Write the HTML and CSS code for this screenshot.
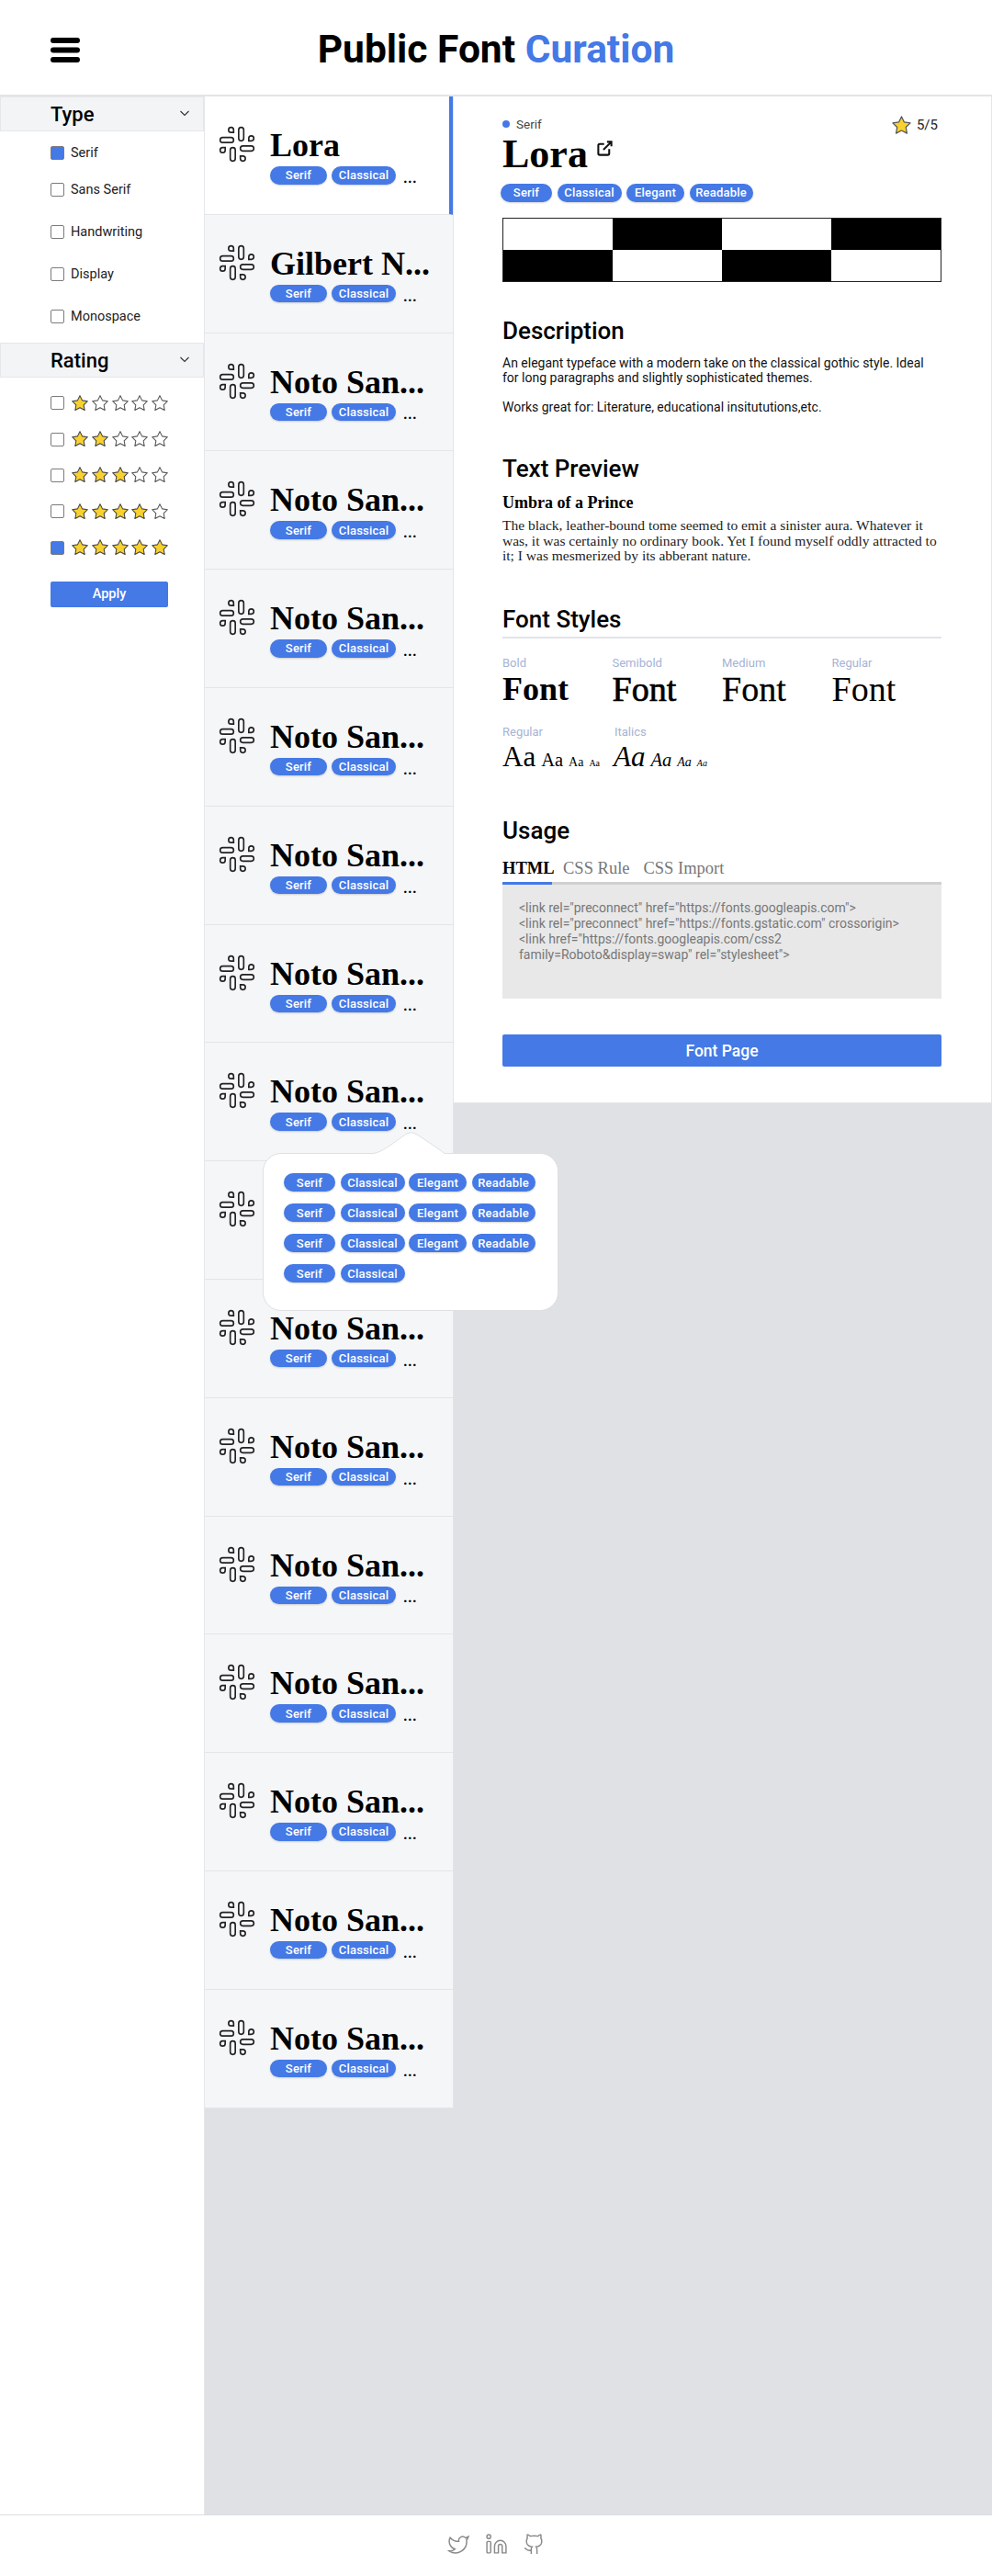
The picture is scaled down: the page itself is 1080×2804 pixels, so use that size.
FILE: index.html
```html
<!DOCTYPE html>
<html lang="en">
<head>
<meta charset="utf-8">
<title>Public Font Curation</title>
<link rel="stylesheet" href="styles.css">
</head>
<body>
<svg class="defs" width="0" height="0" aria-hidden="true">
  <symbol id="slack" viewBox="0 0 24 24"><g fill="none" stroke="currentColor" stroke-width=".9"><rect x="13" y="2" width="3" height="8" rx="1.5"/><path d="M19 8.5V10h1.5A1.5 1.5 0 1 0 19 8.5"/><rect x="8" y="14" width="3" height="8" rx="1.5"/><path d="M5 15.5V14H3.5A1.5 1.5 0 1 0 5 15.5"/><rect x="14" y="13" width="8" height="3" rx="1.5"/><path d="M15.5 19H14v1.5a1.5 1.5 0 1 0 1.5-1.5z"/><rect x="2" y="8" width="8" height="3" rx="1.5"/><path d="M8.5 5H10V3.5A1.5 1.5 0 1 0 8.5 5z"/></g></symbol>
  <symbol id="star" viewBox="0 0 24 24"><polygon points="12 2 15.09 8.26 22 9.27 17 14.14 18.18 21.02 12 17.77 5.82 21.02 7 14.14 2 9.27 8.91 8.26 12 2" stroke-width="1.3" stroke-linejoin="round"/></symbol>
  <symbol id="chev" viewBox="0 0 12 12"><path d="M1.5 4l4.5 4.5L10.500 4" fill="none" stroke="#333" stroke-width="1.100"/></symbol>
</svg>
<div class="page">
  <header class="topbar">
    <svg class="burger" viewBox="0 0 32 27" aria-hidden="true"><path d="M3 3h26M3 13.500h26M3 24h26" fill="none" stroke="#000" stroke-width="6" stroke-linecap="round"/></svg>
    <h1 class="brand">Public Font <span class="brand-accent">Curation</span></h1>
  </header>
  <main class="main">
    <aside class="sidebar">
      <div class="filter-head"><span>Type</span><svg class="chev"><use href="#chev"/></svg></div>
      <div class="type-options">
        <label class="opt opt-short"><i class="box box-on"></i>Serif</label>
        <label class="opt opt-short"><i class="box"></i>Sans Serif</label>
        <label class="opt opt-tall opt-first-tall"><i class="box"></i>Handwriting</label>
        <label class="opt opt-tall"><i class="box"></i>Display</label>
        <label class="opt opt-tall"><i class="box"></i>Monospace</label>
      </div>
      <div class="filter-head"><span>Rating</span><svg class="chev"><use href="#chev"/></svg></div>
      <div class="rating-options">
        <div class="rate"><i class="box"></i><svg class="st on"><use href="#star"/></svg><svg class="st"><use href="#star"/></svg><svg class="st"><use href="#star"/></svg><svg class="st"><use href="#star"/></svg><svg class="st"><use href="#star"/></svg></div>
        <div class="rate"><i class="box"></i><svg class="st on"><use href="#star"/></svg><svg class="st on"><use href="#star"/></svg><svg class="st"><use href="#star"/></svg><svg class="st"><use href="#star"/></svg><svg class="st"><use href="#star"/></svg></div>
        <div class="rate"><i class="box"></i><svg class="st on"><use href="#star"/></svg><svg class="st on"><use href="#star"/></svg><svg class="st on"><use href="#star"/></svg><svg class="st"><use href="#star"/></svg><svg class="st"><use href="#star"/></svg></div>
        <div class="rate"><i class="box"></i><svg class="st on"><use href="#star"/></svg><svg class="st on"><use href="#star"/></svg><svg class="st on"><use href="#star"/></svg><svg class="st on"><use href="#star"/></svg><svg class="st"><use href="#star"/></svg></div>
        <div class="rate"><i class="box box-on"></i><svg class="st on"><use href="#star"/></svg><svg class="st on"><use href="#star"/></svg><svg class="st on"><use href="#star"/></svg><svg class="st on"><use href="#star"/></svg><svg class="st on"><use href="#star"/></svg></div>
      </div>
      <button class="apply">Apply</button>
    </aside>

    <section class="list">
      <article class="row row-active"><svg class="ico"><use href="#slack"/></svg><div class="row-body"><div class="row-name">Lora</div><div class="row-tags"><span class="tag tag-a">Serif</span><span class="tag tag-b">Classical</span><span class="more">...</span></div></div></article>
      <article class="row"><svg class="ico"><use href="#slack"/></svg><div class="row-body"><div class="row-name">Gilbert N...</div><div class="row-tags"><span class="tag tag-a">Serif</span><span class="tag tag-b">Classical</span><span class="more">...</span></div></div></article>
      <article class="row"><svg class="ico"><use href="#slack"/></svg><div class="row-body"><div class="row-name">Noto San...</div><div class="row-tags"><span class="tag tag-a">Serif</span><span class="tag tag-b">Classical</span><span class="more">...</span></div></div></article>
      <article class="row"><svg class="ico"><use href="#slack"/></svg><div class="row-body"><div class="row-name">Noto San...</div><div class="row-tags"><span class="tag tag-a">Serif</span><span class="tag tag-b">Classical</span><span class="more">...</span></div></div></article>
      <article class="row"><svg class="ico"><use href="#slack"/></svg><div class="row-body"><div class="row-name">Noto San...</div><div class="row-tags"><span class="tag tag-a">Serif</span><span class="tag tag-b">Classical</span><span class="more">...</span></div></div></article>
      <article class="row"><svg class="ico"><use href="#slack"/></svg><div class="row-body"><div class="row-name">Noto San...</div><div class="row-tags"><span class="tag tag-a">Serif</span><span class="tag tag-b">Classical</span><span class="more">...</span></div></div></article>
      <article class="row"><svg class="ico"><use href="#slack"/></svg><div class="row-body"><div class="row-name">Noto San...</div><div class="row-tags"><span class="tag tag-a">Serif</span><span class="tag tag-b">Classical</span><span class="more">...</span></div></div></article>
      <article class="row"><svg class="ico"><use href="#slack"/></svg><div class="row-body"><div class="row-name">Noto San...</div><div class="row-tags"><span class="tag tag-a">Serif</span><span class="tag tag-b">Classical</span><span class="more">...</span></div></div></article>
      <article class="row row-pop"><svg class="ico"><use href="#slack"/></svg><div class="row-body"><div class="row-name">Noto San...</div><div class="row-tags"><span class="tag tag-a">Serif</span><span class="tag tag-b">Classical</span><span class="more">...</span></div></div>
        <div class="popover">
          <svg class="pop-arrow" viewBox="0 0 90 24" aria-hidden="true"><path d="M0 23.500h3C13 23.500 34 5 40 2c3-1.500 6-1.500 9 0 6 3 26 17 32 21.500h9V25H0z" fill="#fff"/><path d="M0 23.500h3C13 23.500 34 5 40 2c3-1.500 6-1.500 9 0 6 3 26 17 32 21.500h9" fill="none" stroke="#dfe0e4"/></svg>
          <div class="pop-grid">
            <span class="tag pop-a">Serif</span><span class="tag pop-b">Classical</span><span class="tag pop-c">Elegant</span><span class="tag pop-d">Readable</span>
            <span class="tag pop-a">Serif</span><span class="tag pop-b">Classical</span><span class="tag pop-c">Elegant</span><span class="tag pop-d">Readable</span>
            <span class="tag pop-a">Serif</span><span class="tag pop-b">Classical</span><span class="tag pop-c">Elegant</span><span class="tag pop-d">Readable</span>
            <span class="tag pop-a">Serif</span><span class="tag pop-b">Classical</span>
          </div>
        </div>
      </article>
      <article class="row"><svg class="ico"><use href="#slack"/></svg></article>
      <article class="row"><svg class="ico"><use href="#slack"/></svg><div class="row-body"><div class="row-name">Noto San...</div><div class="row-tags"><span class="tag tag-a">Serif</span><span class="tag tag-b">Classical</span><span class="more">...</span></div></div></article>
      <article class="row"><svg class="ico"><use href="#slack"/></svg><div class="row-body"><div class="row-name">Noto San...</div><div class="row-tags"><span class="tag tag-a">Serif</span><span class="tag tag-b">Classical</span><span class="more">...</span></div></div></article>
      <article class="row"><svg class="ico"><use href="#slack"/></svg><div class="row-body"><div class="row-name">Noto San...</div><div class="row-tags"><span class="tag tag-a">Serif</span><span class="tag tag-b">Classical</span><span class="more">...</span></div></div></article>
      <article class="row"><svg class="ico"><use href="#slack"/></svg><div class="row-body"><div class="row-name">Noto San...</div><div class="row-tags"><span class="tag tag-a">Serif</span><span class="tag tag-b">Classical</span><span class="more">...</span></div></div></article>
      <article class="row"><svg class="ico"><use href="#slack"/></svg><div class="row-body"><div class="row-name">Noto San...</div><div class="row-tags"><span class="tag tag-a">Serif</span><span class="tag tag-b">Classical</span><span class="more">...</span></div></div></article>
      <article class="row"><svg class="ico"><use href="#slack"/></svg><div class="row-body"><div class="row-name">Noto San...</div><div class="row-tags"><span class="tag tag-a">Serif</span><span class="tag tag-b">Classical</span><span class="more">...</span></div></div></article>
      <article class="row"><svg class="ico"><use href="#slack"/></svg><div class="row-body"><div class="row-name">Noto San...</div><div class="row-tags"><span class="tag tag-a">Serif</span><span class="tag tag-b">Classical</span><span class="more">...</span></div></div></article>
    </section>

    <section class="detail">
      <div class="meta">
        <div class="kind"><i class="dot"></i>Serif</div>
        <div class="score"><svg class="score-star"><use href="#star"/></svg>5/5</div>
      </div>
      <div class="title-line">
        <h2 class="font-title">Lora</h2>
        <svg class="ext" viewBox="0 0 24 24" aria-hidden="true"><path d="M18 13v6a2 2 0 0 1-2 2H5a2 2 0 0 1-2-2V8a2 2 0 0 1 2-2h6M15 3h6v6M10 14 21 3" fill="none" stroke="#111" stroke-width="2.600"/></svg>
      </div>
      <div class="detail-tags"><span class="tag pop-a">Serif</span><span class="tag pop-b">Classical</span><span class="tag pop-c">Elegant</span><span class="tag pop-d">Readable</span></div>
      <div class="checker">
        <i class="cell"></i><i class="cell cell-dark"></i><i class="cell"></i><i class="cell cell-dark"></i>
        <i class="cell cell-dark"></i><i class="cell"></i><i class="cell cell-dark"></i><i class="cell"></i>
      </div>

      <h3 class="sec sec-desc">Description</h3>
      <p class="copy">An elegant typeface with a modern take on the classical gothic style. Ideal for long paragraphs and slightly sophisticated themes.</p>
      <p class="copy copy-next">Works great for: Literature, educational insitututions,etc.</p>

      <h3 class="sec sec-preview">Text Preview</h3>
      <h4 class="umbra">Umbra of a Prince</h4>
      <p class="story">The black, leather-bound tome seemed to emit a sinister aura. Whatever it was, it was certainly no ordinary book. Yet I found myself oddly attracted to it; I was mesmerized by its abberant nature.</p>

      <h3 class="sec sec-styles">Font Styles</h3>
      <div class="weights">
        <div><div class="lbl">Bold</div><div class="sample s-bold">Font</div></div>
        <div><div class="lbl">Semibold</div><div class="sample s-semi">Font</div></div>
        <div><div class="lbl">Medium</div><div class="sample s-med">Font</div></div>
        <div><div class="lbl">Regular</div><div class="sample s-reg">Font</div></div>
      </div>
      <div class="scales">
        <div class="scale-col"><div class="lbl">Regular</div><div class="aa-row"><span class="aa1">Aa</span><span class="aa2">Aa</span><span class="aa3">Aa</span><span class="aa4">Aa</span></div></div>
        <div class="scale-col"><div class="lbl lbl-it">Italics</div><div class="aa-row aa-it"><span class="aa1">Aa</span><span class="aa2">Aa</span><span class="aa3">Aa</span><span class="aa4">Aa</span></div></div>
      </div>

      <h3 class="sec sec-usage">Usage</h3>
      <div class="tabs"><span class="tab tab-on">HTML</span><span class="tab">CSS Rule</span><span class="tab">CSS Import</span></div>
      <div class="code">&lt;link rel="preconnect" href="https://fonts.googleapis.com"&gt;<br>&lt;link rel="preconnect" href="https://fonts.gstatic.com" crossorigin&gt;<br>&lt;link href="https://fonts.googleapis.com/css2<br>family=Roboto&amp;display=swap" rel="stylesheet"&gt;</div>
      <button class="page-btn">Font Page</button>
    </section>
  </main>
  <footer class="foot">
    <svg class="social" viewBox="0 0 24 24" aria-hidden="true"><path d="M22 4s-.7 2.100-2 3.400c1.600 10-9.400 17.300-18 11.600 2.200.1 4.400-.6 6-2C3 15.500.5 9.600 3 5c2.200 2.600 5.600 4.100 9 4-.9-4.200 4-6.600 7-3.800 1.100 0 3-1.200 3-1.200z"/></svg>
    <svg class="social" viewBox="0 0 24 24" aria-hidden="true"><path d="M16 8a6 6 0 0 1 6 6v7h-4v-7a2 2 0 0 0-4 0v7h-4v-7a6 6 0 0 1 6-6z"/><rect x="2" y="9" width="4" height="12" rx="1"/><circle cx="4" cy="4" r="2"/></svg>
    <svg class="social" viewBox="0 0 24 24" aria-hidden="true"><path d="M15 22v-4a4.800 4.800 0 0 0-1-3.500c3 0 6-2 6-5.500.08-1.250-.27-2.480-1-3.500.28-1.150.28-2.350 0-3.500 0 0-1 0-3 1.500-2.640-.5-5.360-.5-8 0C6 2 5 2 5 2c-.3 1.150-.3 2.350 0 3.500A5.403 5.403 0 0 0 4 9c0 3.500 3 5.500 6 5.500-.39.490-.68 1.050-.85 1.650-.17.6-.22 1.230-.15 1.850v4M9 18c-4.510 2-5-2-7-2"/></svg>
  </footer>
</div>
</body>
</html>
```

FILE: styles.css
```css
* { box-sizing: border-box; }
html, body { margin: 0; padding: 0; }
body { font-family: Roboto, "Liberation Sans", sans-serif; color: #000; background: #fff; }
.defs { position: absolute; }
.page { display: flex; flex-direction: column; height: 2804px; width: 1080px; overflow: hidden; }

/* header */
.topbar { height: 105px; flex: none; display: flex; align-items: center; position: relative; border-bottom: 2px solid #e3e4e9; justify-content: center; }
.burger { position: absolute; left: 55px; top: 41px; width: 32px; height: 27px; }
.brand { margin: 0; font-size: 42.500px; font-weight: 700; line-height: 48px; position: relative; top: 2px; }
.brand-accent { color: #4479e6; }

.main { flex: 1; display: flex; background: #e0e1e5; min-height: 0; }

/* sidebar */
.sidebar { width: 223px; flex: none; background: #fff; border-right: 1px solid #e6e7eb; }
.filter-head { height: 38px; background: #f3f4f6; border: 1px solid #e6e7eb; display: flex; align-items: center; justify-content: space-between; padding: 0 14px 0 54px; font-size: 22px; font-weight: 500; }
.chev { width: 12px; height: 12px; position: relative; top: -1px; }
.type-options { height: 230px; padding-top: 3px; }
.opt { display: flex; align-items: center; gap: 7px; padding-left: 55px; font-size: 14.500px; color: #222; }
.opt-short { height: 40px; }
.opt-tall { height: 46px; }
.opt-first-tall { margin-top: 3px; }
.box { width: 15px; height: 15px; flex: none; border: 1px solid #7b7b7b; border-radius: 2px; background: #fff; display: block; }
.box-on { background: #4479e6; }
.rating-options { padding-top: 8px; }
.rate { display: flex; align-items: center; height: 39.400px; padding-left: 55px; }
.rate .box { margin-right: 7px; }
.st { width: 20px; height: 20px; margin-right: 1.800px; fill: #fff; stroke: #555; }
.st.on { fill: #f8d12f; stroke: #444; }
.apply { display: block; margin: 17px 0 0 55px; width: 128px; height: 28px; border: 0; border-radius: 2px; background: #4479e6; color: #fff; font: 500 14.500px Roboto, sans-serif; }

/* list */
.list { width: 271px; flex: none; align-self: flex-start; }
.row { height: 128.800px; display: flex; background: #f5f6f8; border-bottom: 1px solid #e4e5e9; border-right: 1px solid #e4e5e9; padding-left: 13px; position: relative; }
.row-active { background: #fff; border-right: 5px solid #4479e6; }
.ico { width: 44px; height: 44px; margin-top: 30px; color: #222; flex: none; }
.row-body { margin-left: 14px; }
.row-name { font-family: "Liberation Serif", serif; font-weight: 700; font-size: 36px; line-height: 40px; margin-top: 33px; white-space: nowrap; }
.row-tags { display: flex; align-items: center; margin-top: 3px; }
.tag { display: flex; align-items: center; justify-content: center; height: 19.500px; border-radius: 10px; background: #4479e6; color: #fff; font-size: 13px; font-weight: 500; box-shadow: 0 1px 2px rgba(0,0,0,.18); letter-spacing: .2px; }
.tag-a { width: 62px; }
.tag-b { width: 70px; margin-left: 5px; }
.more { margin-left: 8px; font-size: 16px; font-weight: 700; line-height: 10px; position: relative; top: 3px; letter-spacing: .3px; }

/* popover */
.popover { position: absolute; left: 63px; top: 120px; width: 322px; height: 172px; background: #fff; border: 1px solid #dfe0e4; border-radius: 20px; z-index: 5; padding: 21px 0 0 22px; }
.pop-arrow { position: absolute; left: 116px; top: -24px; width: 90px; height: 24px; }
.pop-grid { display: grid; grid-template-columns: 56px 69px 63px 69px; gap: 13.500px 5.500px; }
.pop-a { width: 56px; }
.pop-b { width: 70px; }
.pop-c { width: 63px; }
.pop-d { width: 69px; }

/* detail */
.detail { flex: 1; align-self: flex-start; height: 1096px; margin-left: -1px; position: relative; background: #fff; border-left: 1px solid #e4e5e9; padding: 22px 54px 0 53px; border-right: 1px solid #e4e5e9; border-bottom: 1px solid #e4e5e9; }
.meta { display: flex; justify-content: space-between; height: 18px; }
.kind { display: flex; align-items: center; gap: 7px; font-size: 13.500px; color: #444; height: 16px; }
.dot { width: 8px; height: 8px; border-radius: 50%; background: #4479e6; display: block; }
.score { display: flex; align-items: center; gap: 5px; font-size: 15px; margin-right: 4px; color: #222; }
.score-star { width: 23px; height: 23px; fill: #f8d12f; stroke: #555; }
.title-line { display: flex; align-items: flex-start; height: 55px; }
.font-title { margin: -1px 0 0; font-family: "Liberation Serif", serif; font-size: 44px; line-height: 48px; font-weight: 700; }
.ext { width: 19px; height: 19px; margin: 7px 0 0 9px; }
.detail-tags { display: flex; gap: 5.500px; margin-left: -2px; }
.checker { margin-top: 17.500px; height: 70px; display: grid; grid-template-columns: repeat(4, 1fr); grid-template-rows: 1fr 1fr; border: 1px solid #222; }
.cell { display: block; background: #fff; }
.cell-dark { background: #000; }
.sec { margin: 0; font-size: 26px; font-weight: 500; line-height: 30px; }
.sec-desc { margin-top: 38px; }
.copy { margin: 12px 0 0; font-size: 14px; line-height: 16px; color: #111; }
.copy-next { margin-top: 16px; }
.sec-preview { margin-top: 44px; }
.umbra { margin: 12px 0 0; font-family: "Liberation Serif", serif; font-size: 18px; line-height: 20px; font-weight: 700; }
.story { margin: 7px 0 0; font-family: "Liberation Serif", serif; font-size: 15.500px; line-height: 16.700px; color: #222; }
.sec-styles { margin-top: 45px; padding-bottom: 4px; border-bottom: 2px solid #e2e3e6; line-height: 30px; height: 36px; }
.weights { display: grid; grid-template-columns: repeat(4, 1fr); margin-top: 19px; }
.lbl { font-size: 13px; line-height: 16px; color: #a6b3d4; }
.lbl-it { margin-left: 1px; }
.sample { font-family: "Liberation Serif", serif; font-size: 38px; line-height: 40px; margin-bottom: 2px; }
.s-bold { font-weight: 700; font-size: 36px; }
.s-semi { -webkit-text-stroke: .7px #000; }
.s-med { -webkit-text-stroke: .3px #000; }
.scales { display: flex; margin-top: 17px; }
.scale-col { width: 121px; }
.aa-row { display: flex; align-items: baseline; gap: 6px; font-family: "Liberation Serif", serif; line-height: 38px; }
.aa-it { font-style: italic; }
.aa1 { font-size: 31px; }
.aa2 { font-size: 20.500px; }
.aa3 { font-size: 14px; }
.aa4 { font-size: 10px; }
.sec-usage { margin-top: 39px; }
.tabs { display: flex; gap: 15px; margin-top: 15px; height: 29px; font-family: "Liberation Serif", serif; font-size: 18.500px; line-height: 22px; border-bottom: 3px solid #d0d0d0; position: relative; }
.tab { color: #777; display: block; height: 29px; }
.tab-on { color: #000; font-weight: 700; width: 54px; border-bottom: 3px solid #4479e6; margin-right: -3px; }
.code { height: 124px; background: #e8e8e8; padding: 17px 18px; font-size: 14px; line-height: 16.800px; color: #777; }
.page-btn { display: block; width: 100%; height: 35px; margin-top: 39px; border: 0; border-radius: 2px; background: #4479e6; color: #fff; font: 500 17.500px Roboto, sans-serif; }

/* footer */
.foot { height: 67px; flex: none; border-top: 1px solid #dcdde1; display: flex; justify-content: center; gap: 16px; padding-top: 19px; background: #fff; }
.social { width: 25px; height: 25px; fill: none; stroke: #8a8a8a; stroke-width: 1.400; }
```
